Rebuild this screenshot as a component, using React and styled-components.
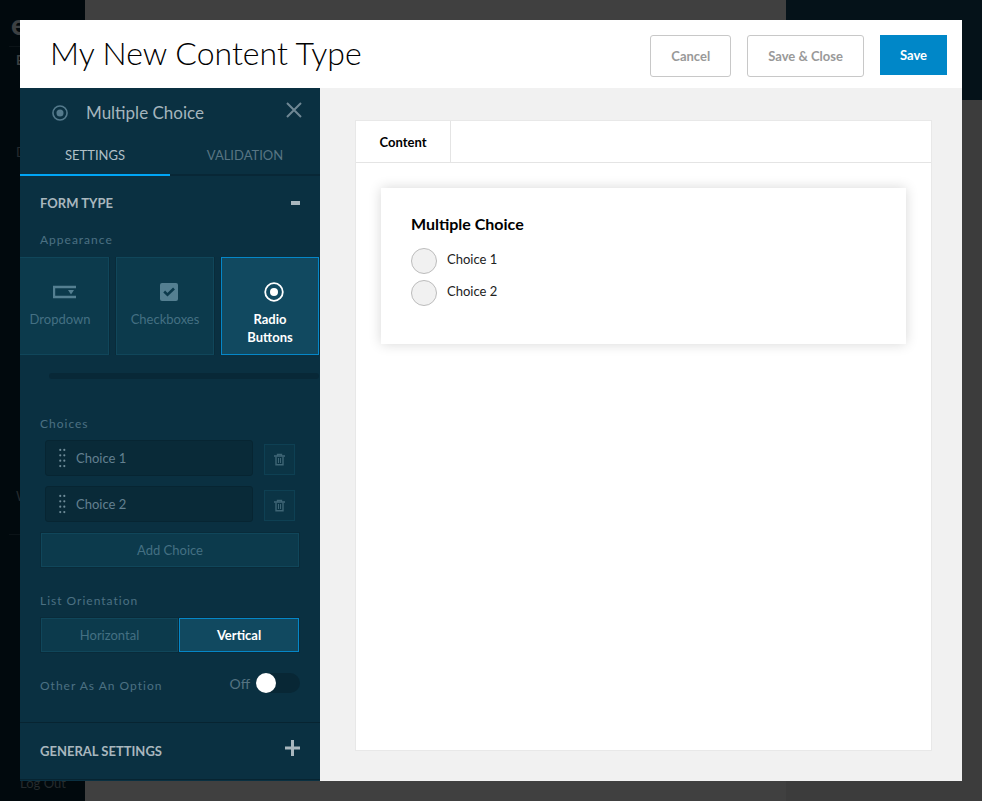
import React, { useState } from 'react';
import styled, { createGlobalStyle, css } from 'styled-components';

const GlobalStyle = createGlobalStyle`
  *, *::before, *::after { box-sizing: border-box; }
  body { margin: 0; background: #404040; }
  body, button, input { font-family: Lato, "Open Sans", sans-serif; }
  button { padding: 0; margin: 0; cursor: pointer; }
  h1, h2, h3, p, ul { margin: 0; padding: 0; font-weight: 400; }
`;

/* Dimmed page behind the dialog */
const Backdrop = styled.div`
  display: grid;
  grid-template-columns: 85px 1fr 196px;
  min-height: 100vh;
  background: #404040;
`;
const NavRail = styled.nav`
  display: flex;
  flex-direction: column;
  height: 100vh;
  overflow: hidden;
  background: #01090d;
  color: #252b2e;
  font-size: 13px;
  line-height: 20px;
`;
const Brand = styled.div`
  height: 47px;
  margin-left: 9px;
  padding: 8px 0 0 2px;
  border-bottom: 1px solid #0b1317;
  color: #3c4042;
  font-size: 29px;
  font-weight: 900;
  line-height: 32px;
`;
const NavGroup = styled.div`
  display: flex;
  flex-direction: column;
  gap: 72px;
  flex: 1 1 auto;
  padding: 3px 0 0 16px;
`;
const NavStrong = styled.span`
  color: #3c4042;
  font-weight: 700;
`;
const NavFooter = styled.div`
  display: flex;
  flex-direction: column;
  justify-content: space-between;
  height: 315px;
  padding: 0 0 8px 16px;
`;
const NavRule = styled.div`
  margin: 28px 0 0 -7px;
  border-bottom: 1px solid #0b1317;
`;
const LogOut = styled.span`
  padding-left: 4px;
`;
const SidePanel = styled.div`
  background: #3c3c3c;
  border-top: 100px solid #051219;
`;

/* Dialog */
const Overlay = styled.div`
  position: fixed;
  inset: 0;
  display: grid;
  padding: 20px;
  overflow: auto;
`;
const Dialog = styled.section`
  display: flex;
  flex-direction: column;
  min-width: 0;
  background: #fff;
`;
const Header = styled.header`
  display: flex;
  align-items: flex-start;
  justify-content: space-between;
  min-height: 68px;
  padding: 15px 15px 0 30px;
`;
const Title = styled.h1`
  color: #000;
  font-size: 32px;
  font-weight: 300;
  line-height: 36px;
`;
const Actions = styled.div`
  display: flex;
  align-items: flex-start;
  gap: 16px;
`;
const ActionButton = styled.button`
  height: ${p => (p.$primary ? 40 : 42)}px;
  padding: 0 20px;
  border: ${p => (p.$primary ? '0' : '1px solid #c8c8c8')};
  border-radius: ${p => (p.$primary ? 0 : 3)}px;
  background: ${p => (p.$primary ? '#0087c8' : '#fff')};
  color: ${p => (p.$primary ? '#fff' : '#999')};
  font-size: 13px;
  font-weight: 700;
`;
const Body = styled.div`
  display: grid;
  grid-template-columns: 300px minmax(0, 1fr);
  flex: 1 1 auto;
`;

/* Settings column */
const Settings = styled.aside`
  display: flex;
  flex-direction: column;
  min-width: 0;
  background: #0a3041;
  color: #547a8c;
`;
const FieldHeader = styled.div`
  display: flex;
  align-items: center;
  gap: 18px;
  height: 48px;
  padding: 2px 18px 0 32px;
`;
const FieldTitle = styled.h2`
  flex: 1;
  color: #a5b5bd;
  font-size: 17px;
  line-height: 24px;
`;
const IconButton = styled.button`
  display: flex;
  margin-bottom: ${p => (p.$raised ? 6 : 0)}px;
  border: 0;
  background: none;
  color: ${p => p.$color || '#6f8794'};
`;
const Tabs = styled.div`
  display: grid;
  grid-template-columns: 1fr 1fr;
  height: 40px;
`;
const SettingsTab = styled.button`
  border: 0;
  border-bottom: 2px solid ${p => (p.$active ? '#00a5f5' : '#082736')};
  background: none;
  color: ${p => (p.$active ? '#b0bfc6' : '#587583')};
  font-size: 13px;
`;
const SectionHeader = styled.div`
  display: flex;
  align-items: center;
  justify-content: space-between;
  height: 54px;
  padding: 0 20px;
`;
const SectionTitle = styled.h3`
  color: #a9b7be;
  font-size: 13px;
  font-weight: 700;
`;
const FieldLabel = styled.div`
  padding: 0 20px;
  color: #4c7183;
  font-size: 12px;
  letter-spacing: 1px;
  line-height: 20px;
`;
const Options = styled.div`
  display: flex;
  justify-content: flex-end;
  gap: 7px;
  margin-top: 7px;
  padding-right: 1px;
  overflow: hidden;
`;
const tile = css`
  border: 1px solid ${p => (p.$active ? '#0587c8' : '#10465a')};
  background: ${p => (p.$active ? '#114960' : '#0c3a4c')};
  box-shadow: 0 0 0 1px #092b3a;
  color: ${p => (p.$active ? '#fff' : '#447083')};
  font-size: 13px;
  font-weight: ${p => (p.$active ? 700 : 400)};
`;
const Option = styled.button`
  ${tile}
  display: flex;
  flex: 0 0 98px;
  flex-direction: column;
  align-items: center;
  gap: 8px;
  height: 98px;
  padding: 24px 10px 0;
  line-height: 18px;
  svg { margin-left: 8px; color: ${p => (p.$active ? '#fff' : '#547f91')}; }
`;
const ScrollTrack = styled.div`
  height: 6px;
  margin: 18px 1px 0 29px;
  border-radius: 3px;
  background: #082837;
`;
const Group = styled.div`
  margin-top: ${p => p.$gap}px;
`;
const Choices = styled.ul`
  display: flex;
  flex-direction: column;
  gap: 10px;
  padding: 6px 25px 0;
  list-style: none;
`;
const ChoiceRow = styled.li`
  display: flex;
  align-items: center;
  gap: 11px;
`;
const ChoiceField = styled.div`
  display: flex;
  flex: 1;
  align-items: center;
  gap: 9px;
  min-width: 0;
  height: 36px;
  padding: 0 12px;
  border: 1px solid #072532;
  border-radius: 3px;
  background: #092a38;
`;
const ChoiceInput = styled.input`
  width: 100%;
  min-width: 0;
  padding: 0;
  border: 0;
  outline: 0;
  background: transparent;
  color: #638090;
  font-size: 13px;
`;
const DeleteButton = styled.button`
  display: flex;
  align-items: center;
  justify-content: center;
  width: 31px;
  height: 31px;
  margin-top: 2px;
  border: 1px solid #0e4053;
  background: #0b3445;
  color: #3e6575;
`;
const AddButton = styled.button`
  ${tile}
  display: block;
  width: calc(100% - 42px);
  height: 34px;
  margin: 11px 21px 0;
`;
const Segments = styled.div`
  display: grid;
  grid-template-columns: 137fr 120fr;
  gap: 1px;
  margin: 7px 21px 0;
`;
const Segment = styled.button`
  ${tile}
  height: 34px;
`;
const SwitchRow = styled.div`
  display: flex;
  align-items: flex-end;
  justify-content: space-between;
  height: 28px;
  margin-top: 16px;
  padding-right: 20px;
`;
const SwitchLabel = styled.label`
  display: flex;
  align-items: center;
  gap: 6px;
  height: 26px;
  color: #547382;
  font-size: 14px;
`;
const Switch = styled.input`
  display: flex;
  width: 44px;
  height: 20px;
  margin: 0;
  appearance: none;
  border-radius: 10px;
  background: #082735;
  cursor: pointer;
  &::before {
    width: 20px;
    height: 20px;
    border-radius: 50%;
    background: #fff;
    content: '';
  }
  &:checked { justify-content: flex-end; background: #0087c8; }
`;
const GeneralSection = styled.div`
  margin-top: 26px;
  border: solid #072431;
  border-width: 1px 0;
  ${SectionHeader} { height: 56px; }
`;

/* Preview column */
const Preview = styled.main`
  display: flex;
  padding: 32px 30px 30px 35px;
  background: #f1f1f1;
`;
const Sheet = styled.div`
  flex: 1;
  min-width: 0;
  border: 1px solid #e8e8e8;
  background: #fff;
`;
const SheetTabs = styled.div`
  height: 42px;
  border-bottom: 1px solid #e4e4e4;
`;
const SheetTab = styled.button`
  width: 95px;
  height: 41px;
  border: 0;
  border-right: 1px solid #e4e4e4;
  background: #fff;
  color: #000;
  font-size: 13px;
  font-weight: 700;
`;
const Card = styled.fieldset`
  min-width: 0;
  min-height: 156px;
  margin: 25px;
  padding: 26px 30px;
  border: 0;
  background: #fff;
  box-shadow: 0 0 12px rgba(0, 0, 0, 0.16);
`;
const CardTitle = styled.h2`
  color: #000;
  font-size: 16px;
  font-weight: 700;
  line-height: 20px;
`;
const RadioList = styled.div`
  display: flex;
  flex-direction: column;
  gap: 6px;
  margin-top: 14px;
`;
const RadioLabel = styled.label`
  display: flex;
  gap: 10px;
  color: #222;
  font-size: 13px;
  line-height: 22px;
`;
const Radio = styled.input`
  display: grid;
  place-items: center;
  width: 26px;
  height: 26px;
  margin: 0;
  appearance: none;
  border: 1px solid #bcbcbc;
  border-radius: 50%;
  background: #f1f1f1;
  &:checked::before {
    width: 12px;
    height: 12px;
    border-radius: 50%;
    background: #0087c8;
    content: '';
  }
`;

const RadioIcon = ({ size, stroke, dot }) => (
  <svg width={size} height={size} viewBox="0 0 20 20" aria-hidden="true">
    <circle cx="10" cy="10" r="8.800" fill="none" stroke="currentColor" strokeWidth={stroke} />
    <circle cx="10" cy="10" r={dot} fill="currentColor" />
  </svg>
);
const DropdownIcon = () => (
  <svg width="23" height="20" viewBox="0 0 23 20" aria-hidden="true">
    <path d="M23 5H1V15H23" fill="none" stroke="currentColor" strokeWidth="2.400" />
    <path d="M15 8h6l-3 4.500z" fill="currentColor" />
  </svg>
);
const CheckIcon = () => (
  <svg width="18" height="20" viewBox="0 0 18 20" aria-hidden="true">
    <rect y="1" width="18" height="18" rx="2" fill="currentColor" />
    <path d="M4.200 9.500l3.300 3.300L14 6.500" fill="none" stroke="#0c3a4c" strokeWidth="2.600" />
  </svg>
);
const CloseIcon = () => (
  <svg width="16" height="16" viewBox="0 0 16 16" aria-hidden="true">
    <path d="M1 1l14 14M15 1L1 15" stroke="currentColor" strokeWidth="2" />
  </svg>
);
const MinusIcon = () => (
  <svg width="9" height="4" viewBox="0 0 9 4" aria-hidden="true">
    <path d="M0 2h9" stroke="currentColor" strokeWidth="4" />
  </svg>
);
const PlusIcon = () => (
  <svg width="15" height="16" viewBox="0 0 15 16" aria-hidden="true">
    <path d="M0 8h15M7.500 0v16" stroke="currentColor" strokeWidth="3" />
  </svg>
);
const GripIcon = () => (
  <svg width="10" height="22" viewBox="0 0 10 22" fill="#6f8c99" aria-hidden="true">
    {[2, 8, 14, 20].map(y => (
      <g key={y}>
        <circle cx="2.500" cy={y} r="1.200" />
        <circle cx="7" cy={y} r="1.200" />
      </g>
    ))}
  </svg>
);
const TrashIcon = () => (
  <svg width="11" height="14" viewBox="0 0 11 14" fill="none" stroke="currentColor" aria-hidden="true">
    <path d="M0 4h11" strokeWidth="1.600" />
    <path d="M3.500 4V2.500h4V4M2 4.500v8.300h7V4.500" strokeWidth="1.400" />
    <path d="M4.500 6v5M6.500 6v5" />
  </svg>
);

const appearances = [
  { name: 'Dropdown', icon: <DropdownIcon /> },
  { name: 'Checkboxes', icon: <CheckIcon /> },
  { name: 'Radio Buttons', icon: <RadioIcon size={20} stroke={1.8} dot={4} /> },
];

export default function App() {
  const [tab, setTab] = useState('SETTINGS');
  const [appearance, setAppearance] = useState('Radio Buttons');
  const [orientation, setOrientation] = useState('Vertical');
  const [choices, setChoices] = useState(['Choice 1', 'Choice 2']);
  const [other, setOther] = useState(false);

  return (
    <>
      <GlobalStyle />
      <Backdrop aria-hidden="true">
        <NavRail>
          <Brand>evoq</Brand>
          <NavGroup>
            <NavStrong>B</NavStrong>
            <span>D</span>
          </NavGroup>
          <NavFooter>
            <div>
              <span>W</span>
              <NavRule />
            </div>
            <LogOut>Log Out</LogOut>
          </NavFooter>
        </NavRail>
        <div />
        <SidePanel />
      </Backdrop>
      <Overlay>
        <Dialog role="dialog" aria-labelledby="dialog-title">
          <Header>
            <Title id="dialog-title">My New Content Type</Title>
            <Actions>
              <ActionButton type="button">Cancel</ActionButton>
              <ActionButton type="button">Save &amp; Close</ActionButton>
              <ActionButton type="button" $primary>Save</ActionButton>
            </Actions>
          </Header>
          <Body>
            <Settings>
              <FieldHeader>
                <RadioIcon size={16} stroke={2} dot={4.4} />
                <FieldTitle>Multiple Choice</FieldTitle>
                <IconButton type="button" aria-label="Close" $raised><CloseIcon /></IconButton>
              </FieldHeader>
              <Tabs role="tablist">
                {['SETTINGS', 'VALIDATION'].map(name => (
                  <SettingsTab key={name} type="button" role="tab" aria-selected={tab === name} $active={tab === name} onClick={() => setTab(name)}>
                    {name}
                  </SettingsTab>
                ))}
              </Tabs>
              <SectionHeader>
                <SectionTitle>FORM TYPE</SectionTitle>
                <IconButton type="button" aria-label="Collapse" $color="#a9b7be"><MinusIcon /></IconButton>
              </SectionHeader>
              <FieldLabel>Appearance</FieldLabel>
              <Options>
                {appearances.map(({ name, icon }) => (
                  <Option key={name} type="button" aria-pressed={appearance === name} $active={appearance === name} onClick={() => setAppearance(name)}>
                    {icon}
                    <span>{name}</span>
                  </Option>
                ))}
              </Options>
              <ScrollTrack />
              <Group $gap={35}>
                <FieldLabel>Choices</FieldLabel>
                <Choices>
                  {choices.map((choice, i) => (
                    <ChoiceRow key={i}>
                      <ChoiceField>
                        <GripIcon />
                        <ChoiceInput
                          aria-label={`Choice ${i + 1}`}
                          value={choice}
                          onChange={e => setChoices(choices.map((c, n) => (n === i ? e.target.value : c)))}
                        />
                      </ChoiceField>
                      <DeleteButton type="button" aria-label="Delete choice" onClick={() => setChoices(choices.filter((_, n) => n !== i))}>
                        <TrashIcon />
                      </DeleteButton>
                    </ChoiceRow>
                  ))}
                </Choices>
                <AddButton type="button" onClick={() => setChoices([...choices, `Choice ${choices.length + 1}`])}>Add Choice</AddButton>
              </Group>
              <Group $gap={24}>
                <FieldLabel>List Orientation</FieldLabel>
                <Segments>
                  {['Horizontal', 'Vertical'].map(name => (
                    <Segment key={name} type="button" aria-pressed={orientation === name} $active={orientation === name} onClick={() => setOrientation(name)}>
                      {name}
                    </Segment>
                  ))}
                </Segments>
              </Group>
              <SwitchRow>
                <FieldLabel id="other-label">Other As An Option</FieldLabel>
                <SwitchLabel>
                  {other ? 'On' : 'Off'}
                  <Switch type="checkbox" role="switch" aria-labelledby="other-label" checked={other} onChange={e => setOther(e.target.checked)} />
                </SwitchLabel>
              </SwitchRow>
              <GeneralSection>
                <SectionHeader>
                  <SectionTitle>GENERAL SETTINGS</SectionTitle>
                  <IconButton type="button" aria-label="Expand" $raised $color="#a9b7be"><PlusIcon /></IconButton>
                </SectionHeader>
              </GeneralSection>
            </Settings>
            <Preview>
              <Sheet>
                <SheetTabs>
                  <SheetTab type="button">Content</SheetTab>
                </SheetTabs>
                <Card aria-labelledby="card-title">
                  <CardTitle id="card-title">Multiple Choice</CardTitle>
                  <RadioList>
                    {choices.map((choice, i) => (
                      <RadioLabel key={i}>
                        <Radio type="radio" name="choice" />
                        {choice}
                      </RadioLabel>
                    ))}
                  </RadioList>
                </Card>
              </Sheet>
            </Preview>
          </Body>
        </Dialog>
      </Overlay>
    </>
  );
}
